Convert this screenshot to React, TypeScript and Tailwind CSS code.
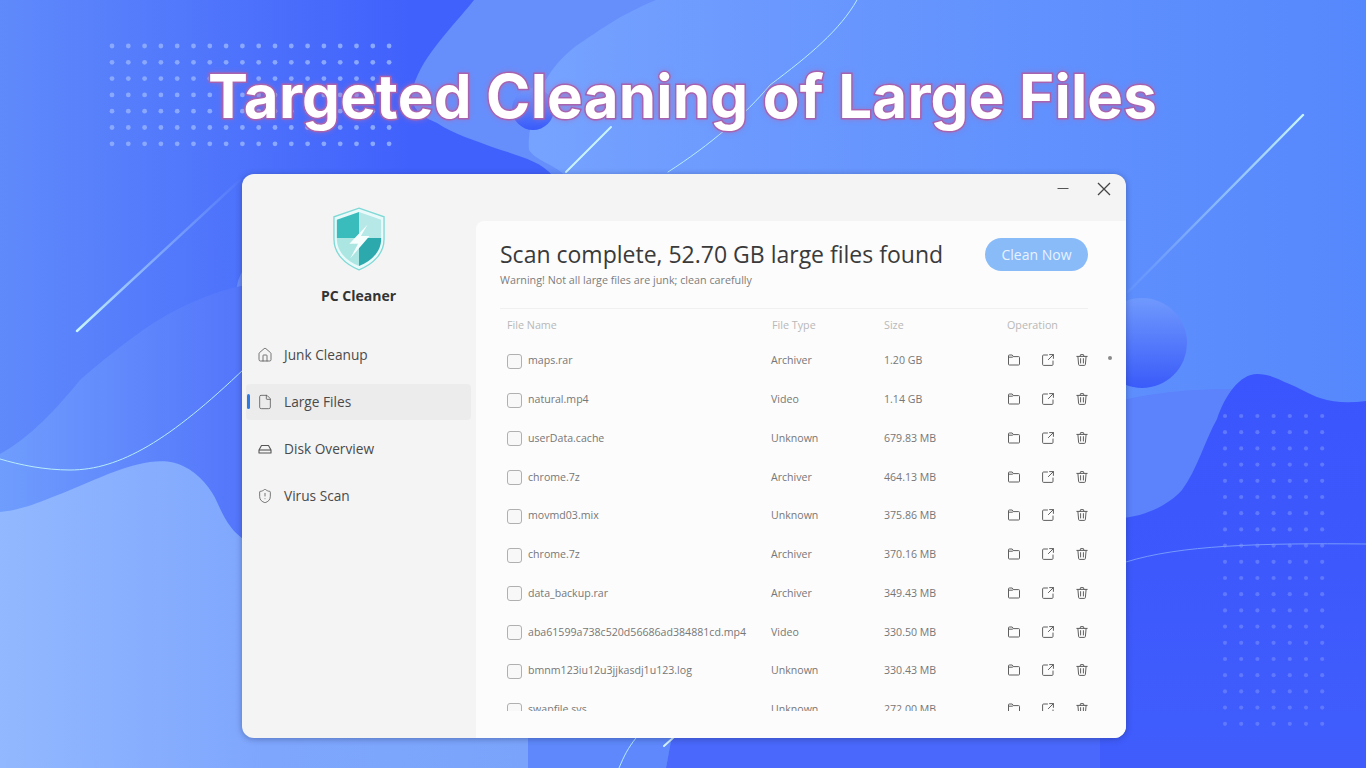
import React from "react";
import { Home, File, ShieldAlert } from "lucide-react";

const rows = [
  ["maps.rar", "Archiver", "1.20 GB"],
  ["natural.mp4", "Video", "1.14 GB"],
  ["userData.cache", "Unknown", "679.83 MB"],
  ["chrome.7z", "Archiver", "464.13 MB"],
  ["movmd03.mix", "Unknown", "375.86 MB"],
  ["chrome.7z", "Archiver", "370.16 MB"],
  ["data_backup.rar", "Archiver", "349.43 MB"],
  ["aba61599a738c520d56686ad384881cd.mp4", "Video", "330.50 MB"],
  ["bmnm123iu12u3jjkasdj1u123.log", "Unknown", "330.43 MB"],
  ["swapfile.sys", "Unknown", "272.00 MB"],
];

function Dots({ x, y, cols, rowsN, step, color, r: rad }: { x: number; y: number; cols: number; rowsN: number; step: number; color: string; r: number }) {
  const out = [];
  for (let r = 0; r < rowsN; r++) for (let c = 0; c < cols; c++) out.push(<circle key={r + "-" + c} cx={x + c * step} cy={y + r * step} r={rad} fill={color} />);
  return <g>{out}</g>;
}

function Background() {
  return (
    <svg className="absolute inset-0" width="1366" height="768" viewBox="0 0 1366 768">
      <defs>
        <linearGradient id="bg" x1="0" y1="0" x2="1" y2="0">
          <stop offset="0" stopColor="#5f8afb" />
          <stop offset="0.3" stopColor="#4161fc" />
          <stop offset="1" stopColor="#4161fc" />
        </linearGradient>
        <linearGradient id="inner" gradientUnits="userSpaceOnUse" x1="540" y1="0" x2="1366" y2="0">
          <stop offset="0" stopColor="#76a3ff" />
          <stop offset="0.25" stopColor="#6b99fe" />
          <stop offset="1" stopColor="#5688fd" />
        </linearGradient>
        <linearGradient id="blobL" gradientUnits="userSpaceOnUse" x1="0" y1="0" x2="245" y2="0">
          <stop offset="0" stopColor="#6f9dfd" />
          <stop offset="1" stopColor="#5375fb" />
        </linearGradient>
        <linearGradient id="blobLL" gradientUnits="userSpaceOnUse" x1="0" y1="0" x2="528" y2="0">
          <stop offset="0" stopColor="#92b8ff" />
          <stop offset="0.5" stopColor="#7ea6fd" />
          <stop offset="1" stopColor="#7aa4fb" />
        </linearGradient>
        <linearGradient id="dark" gradientUnits="userSpaceOnUse" x1="0" y1="374" x2="0" y2="768">
          <stop offset="0" stopColor="#3a55fd" />
          <stop offset="1" stopColor="#405dfc" />
        </linearGradient>
        <linearGradient id="ball" x1="0" y1="0" x2="0" y2="1">
          <stop offset="0" stopColor="#7099fd" />
          <stop offset="1" stopColor="#3a5bf9" />
        </linearGradient>
        <linearGradient id="l1" gradientUnits="userSpaceOnUse" x1="77" y1="331" x2="240" y2="180">
          <stop offset="0" stopColor="#c8f6fd" />
          <stop offset="0.5" stopColor="#9cc4fd" stopOpacity="0.6" />
          <stop offset="1" stopColor="#9cc4fd" stopOpacity="0.05" />
        </linearGradient>
        <linearGradient id="l2" gradientUnits="userSpaceOnUse" x1="1303" y1="115" x2="1128" y2="292">
          <stop offset="0" stopColor="#c8f6fd" />
          <stop offset="0.5" stopColor="#a4d4fd" stopOpacity="0.6" />
          <stop offset="1" stopColor="#9cc4fd" stopOpacity="0.1" />
        </linearGradient>
      </defs>
      <rect width="1366" height="768" fill="url(#bg)" />
      <path d="M474 0C450 30 418 60 412 93C410 110 425 118 437 123C455 135 475 140 492 147C515 155 540 160 553 176L700 176L700 0Z" fill="#668ffc" />
      <path d="M656 0C620 15 600 30 585 40C560 55 542 80 535 105C530 125 528 140 529 150C535 160 555 165 566 176L600 176L600 768L1366 768L1366 0Z" fill="url(#inner)" />
      <path d="M528 730L673 730L666 768L528 768Z" fill="#5e88fb" />
      <path d="M673 730L1126 730L1126 768L666 768Z" fill="#4a68fb" />
      <circle cx="533" cy="109" r="21" fill="url(#ball)" />
      <ellipse cx="262" cy="295" rx="26" ry="36" fill="#6a8dfc" />
      <path d="M0 454C30 438 60 405 80 380C100 362 125 343 143 330C170 312 200 295 245 285L245 600L0 600Z" fill="url(#blobL)" />
      <path d="M0 512C20 510 35 504 50 498C85 485 120 466 150 462C165 460 175 462 183 466C200 474 212 490 217 502C225 520 232 532 245 540L528 730L528 768L0 768Z" fill="url(#blobLL)" />
      <path d="M1100 405C1130 398 1170 388 1240 389L1240 520L1100 520Z" fill="#5c82fc" />
      <path d="M1120 518C1145 517 1170 504 1182 490C1197 470 1205 440 1217 419C1225 395 1240 374 1257 374C1270 374 1280 380 1287 383C1300 388 1310 395 1320 398C1335 403 1350 403 1366 401L1366 768L1100 768L1100 518Z" fill="url(#dark)" />
      <circle cx="1142" cy="343" r="45" fill="url(#ball)" />
      <Dots x={112} y={46} cols={18} rowsN={7} step={16.3} color="#8aa8fd" r={2.4} />
      <Dots x={1225} y={416} cols={7} rowsN={20} step={16.2} color="#5f78fd" r={2.1} />
      <g fill="none" strokeLinecap="round">
        <path d="M77 331L240 180" stroke="url(#l1)" strokeWidth="2.4" />
        <path d="M1303 115L1128 292" stroke="url(#l2)" strokeWidth="2.4" />
        <path d="M566 172L611 127" stroke="#c9f4fc" strokeWidth="2" />
        <path d="M668 172C710 145 745 115 770 85C810 55 840 30 857 0" stroke="#b8ecf9" strokeWidth="1" />
        <path d="M0 459C20 465 45 470 70 470C120 470 170 440 245 368" stroke="#b8ecf9" strokeWidth="1" />
        <path d="M1126 562C1180 545 1260 543 1366 544" stroke="#7698fd" strokeWidth="1" />
        <path d="M619 768C624 756 628 748 636 738" stroke="#b8ecf9" strokeWidth="1" />
        <path d="M664 746L674 737" stroke="#d4f4fd" strokeWidth="2" />
      </g>
    </svg>
  );
}

function Logo() {
  return (
    <svg width="52" height="64" viewBox="0 0 54 66">
      <path d="M27 1L53 10V33C53 48 42 59 27 65C12 59 1 48 1 33V10Z" fill="#eafafa" stroke="#7fd9d6" strokeWidth="1.4" />
      <path d="M27 5L4 13V32H27Z" fill="#3abcbc" />
      <path d="M27 5L50 13V32H27Z" fill="#b5e8e6" />
      <path d="M4 32H27V61C14 56 4 46 4 33Z" fill="#abe6e3" />
      <path d="M50 32H27V61C40 56 50 46 50 33Z" fill="#2ca9ad" />
      <path d="M36 18L17 38H26L18 53L38 30H29Z" fill="#f6fdfd" />
    </svg>
  );
}

function DiskIcon() {
  return (
    <svg width="16" height="16" viewBox="0 0 16 16" fill="none" stroke="#555" strokeWidth="1.1">
      <path d="M2 9L4.5 4.5H11.5L14 9V12H2V9Z" strokeLinejoin="round" />
      <path d="M2 9H14" />
    </svg>
  );
}

function FolderIcon() {
  return (
    <svg width="14" height="14" viewBox="0 0 14 14" fill="none" stroke="#5f5f5f" strokeWidth="1" strokeLinejoin="round">
      <path d="M1.5 2.8a.8.8 0 0 1 .8-.8H5.2L6.4 3.6H11.7a.8.8 0 0 1 .8.8V11.2a.8.8 0 0 1-.8.8H2.3a.8.8 0 0 1-.8-.8Z" />
      <path d="M1.5 4.2H5.4L6.4 3.6" />
    </svg>
  );
}

function OpenIcon() {
  return (
    <svg width="14" height="14" viewBox="0 0 14 14" fill="none" stroke="#5f5f5f" strokeWidth="1" strokeLinecap="round" strokeLinejoin="round">
      <path d="M6.5 2H2.6a1 1 0 0 0-1 1V11.4a1 1 0 0 0 1 1H11a1 1 0 0 0 1-1V8" />
      <path d="M8.6 1.6H12.4V5.4M12.4 1.6L7.4 6.6" />
    </svg>
  );
}

function TrashIcon() {
  return (
    <svg width="14" height="14" viewBox="0 0 14 14" fill="none" stroke="#5f5f5f" strokeWidth="1" strokeLinecap="round" strokeLinejoin="round">
      <path d="M1.8 3.4H12.2M5 3.4L5.6 1.6H8.4L9 3.4" />
      <path d="M2.9 3.4L3.6 11.4a1 1 0 0 0 1 1H9.4a1 1 0 0 0 1-1L11.1 3.4" />
      <path d="M5.6 5.6V10M8.4 5.6V10" />
    </svg>
  );
}

function NavItem({ icon, label, active }: { icon: React.ReactNode; label: string; active?: boolean }) {
  return (
    <div className={`relative flex h-[36px] items-center rounded-sm pl-[11px] ${active ? "bg-[#ececec]" : ""}`}>
      {active && <span className="absolute left-[1px] top-[10px] h-[15px] w-[3px] rounded-full bg-[#2f7ae0]" />}
      <span className="flex w-[27px] items-center text-[#555555]">{icon}</span>
      <span className="text-[13.7px] text-[#4a4a4a]">{label}</span>
    </div>
  );
}

export default function App() {
  return (
    <div className="relative h-[768px] w-[1366px] overflow-hidden font-['Open_Sans','Noto_Sans',sans-serif]">
      <Background />
      <h1 className="relative whitespace-nowrap pl-[208px] pt-[58px] font-['Inter','Noto_Sans',sans-serif] text-[60px] font-bold leading-[76px] tracking-[0.2px] text-white [-webkit-text-stroke:3px_#a35fb0] [paint-order:stroke_fill] [text-shadow:0_0_6px_#b06ab0]">
        Targeted Cleaning of Large Files
      </h1>
      <div className="absolute left-[242px] top-[174px] flex h-[564px] w-[884px] overflow-hidden rounded-[12px] bg-[#f4f4f4] shadow-[0_1px_6px_rgba(30,40,90,0.4)]">
        <aside className="flex w-[234px] shrink-0 flex-col pl-[4px] pr-[5px]">
          <div className="flex flex-col items-center pt-[33px]">
            <Logo />
            <div className="mt-[14px] text-[14px] font-bold text-[#333333]">PC Cleaner</div>
          </div>
          <nav className="mt-[31px] flex flex-col gap-[11px]">
            <NavItem icon={<Home size={16} strokeWidth={1.2} />} label="Junk Cleanup" />
            <NavItem active icon={<File size={16} strokeWidth={1.2} />} label="Large Files" />
            <NavItem icon={<DiskIcon />} label="Disk Overview" />
            <NavItem icon={<ShieldAlert size={16} strokeWidth={1.2} />} label="Virus Scan" />
          </nav>
        </aside>
        <div className="flex min-w-0 flex-1 flex-col">
          <div className="flex h-[47px] shrink-0 items-start justify-end gap-[28px] pr-[15px] pt-[8px]">
            <svg width="12" height="14" viewBox="0 0 12 14" stroke="#555555" strokeWidth="1"><path d="M0.5 6.5H11.5" /></svg>
            <svg width="14" height="14" viewBox="0 0 14 14" stroke="#444444" strokeWidth="1.3"><path d="M1 1L13 13M13 1L1 13" /></svg>
          </div>
          <main className="relative min-h-0 flex-1 overflow-hidden rounded-tl-[8px] bg-[#fcfcfc] pl-[24px] pr-[38px]">
            <div className="flex items-start justify-between pt-[17px]">
              <div>
                <div className="text-[23px] leading-[33px] text-[#3a3a3a]">Scan complete, 52.70 GB large files found</div>
                <div className="mt-[1px] text-[10.75px] leading-[16px] text-[#7d7d7d]">Warning! Not all large files are junk; clean carefully</div>
              </div>
              <button className="h-[33px] w-[103px] rounded-full bg-[#89bbf9] text-[14px] text-[#e8f2fe]">Clean Now</button>
            </div>
            <div className="mt-[20px] border-t border-[#f0f0f0]" />
            <div className="flex h-[33px] items-center pl-[7px] text-[10.75px] text-[#b8b8b8]">
              <div className="w-[265px] shrink-0">File Name</div>
              <div className="w-[112px] shrink-0">File Type</div>
              <div className="w-[123px] shrink-0">Size</div>
              <div>Operation</div>
            </div>
            <div className="h-[369px] overflow-hidden">
              {rows.map((r, i) => (
                <div key={i} className="flex h-[38.75px] items-center pl-[7px] text-[10.6px] text-[#777777]">
                  <div className="flex w-[264px] shrink-0 items-center gap-[6px]">
                    <span className="h-[15px] w-[15px] shrink-0 rounded-[3px] border border-[#b0b0b0] bg-[#f8f8f8]" />
                    <span className="whitespace-nowrap">{r[0]}</span>
                  </div>
                  <div className="w-[113px] shrink-0">{r[1]}</div>
                  <div className="w-[123px] shrink-0">{r[2]}</div>
                  <div className="mb-[2px] flex shrink-0 gap-[20px]">
                    <FolderIcon />
                    <OpenIcon />
                    <TrashIcon />
                  </div>
                </div>
              ))}
            </div>
            <span className="absolute left-[632px] top-[135px] h-[4px] w-[4px] rounded-full bg-[#8a8a8a]" />
          </main>
        </div>
      </div>
    </div>
  );
}
